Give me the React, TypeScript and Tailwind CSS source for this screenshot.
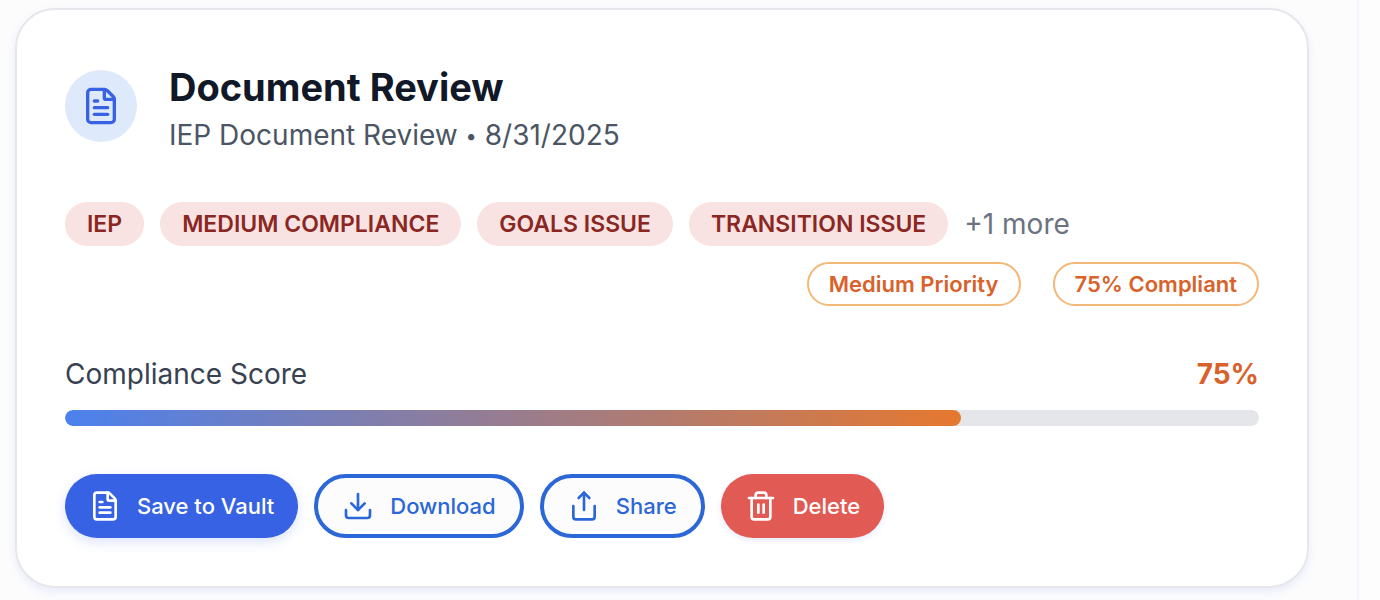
import { Download, FileText, Share, Trash2 } from "lucide-react";

const tags = ["IEP", "MEDIUM COMPLIANCE", "GOALS ISSUE", "TRANSITION ISSUE"];
const statuses = ["Medium Priority", "75% Compliant"];
const score = 75;

const buttonBase = "flex h-16 items-center gap-4 rounded-[32px] px-6 text-[22px] font-medium";
const outlineButton = "border-4 border-[#2b67d6] bg-[#fcfcfd] text-[#2b67d6]";

export default function App() {
  return (
    <div className="min-h-screen overflow-hidden bg-[#fdfdfe] pr-[21px] font-['Inter',sans-serif]">
      <main className="min-h-screen border-r-2 border-[#f3f5fd] bg-[#fcfcfd] pt-2 pr-12 pb-3 pl-[15px]">
        <article className="rounded-[40px] border-2 border-[#e5e7eb] bg-white p-12 shadow-[0_4px_8px_rgba(55,98,227,0.10)]">
          <header className="flex items-center gap-8">
            <div className="flex size-[72px] shrink-0 items-center justify-center rounded-full bg-[#dee9fb]">
              <FileText size={40} className="text-[#3762e3]" aria-hidden="true" />
            </div>
            <div>
              <h1 className="text-[38px] leading-[58px] font-bold text-[#111827]">Document Review</h1>
              <p className="text-[28px] leading-[38px] text-[#4b5563]">
                IEP Document Review <span className="align-[2px] text-xl leading-none">•</span> 8/31/2025
              </p>
            </div>
          </header>

          <div className="mt-12 flex items-center gap-4">
            {tags.map((tag) => (
              <span key={tag} className="flex h-11 items-center rounded-full bg-[#f8e3e2] px-[22px] text-[23px] font-semibold whitespace-nowrap text-[#8b2722]">
                {tag}
              </span>
            ))}
            <span className="text-[28px] leading-10 whitespace-nowrap text-[#6b7280]">+1 more</span>
          </div>

          <div className="mt-4 flex justify-end gap-8">
            {statuses.map((status) => (
              <span key={status} className="flex h-11 items-center rounded-full border-2 border-[#f3b877] px-5 text-[22px] font-semibold whitespace-nowrap text-[#d9622b]">
                {status}
              </span>
            ))}
          </div>

          <section className="mt-12">
            <div className="flex items-center justify-between text-[28px] leading-10">
              <span id="score-label" className="text-[#374151]">Compliance Score</span>
              <span className="font-bold text-[#d9622b]">{score}%</span>
            </div>
            <div
              role="progressbar"
              aria-labelledby="score-label"
              aria-valuenow={score}
              aria-valuemin={0}
              aria-valuemax={100}
              className="mt-4 h-4 overflow-hidden rounded-full bg-[#e5e6ea]"
            >
              <div className="h-full rounded-full bg-linear-to-r/srgb from-[#4b81ee] to-[#e6782f]" style={{ width: `${score}%` }} />
            </div>
          </section>

          <div className="mt-12 flex gap-4">
            <button type="button" className={`${buttonBase} bg-[#3762e3] text-white shadow-[0_4px_12px_rgba(55,98,227,0.18)]`}>
              <FileText size={32} aria-hidden="true" />
              Save to Vault
            </button>
            <button type="button" className={`${buttonBase} ${outlineButton}`}>
              <Download size={32} aria-hidden="true" />
              Download
            </button>
            <button type="button" className={`${buttonBase} ${outlineButton}`}>
              <Share size={32} aria-hidden="true" />
              Share
            </button>
            <button type="button" className={`${buttonBase} bg-[#e25a54] text-white shadow-[0_2px_6px_rgba(55,98,227,0.14)]`}>
              <Trash2 size={32} aria-hidden="true" />
              Delete
            </button>
          </div>
        </article>
      </main>
    </div>
  );
}
